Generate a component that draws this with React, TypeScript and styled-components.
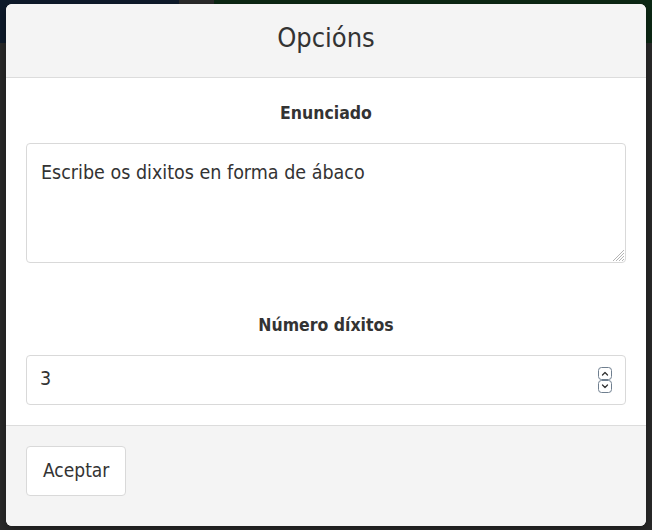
import React from 'react';
import styled, { createGlobalStyle } from 'styled-components';

const FONT = `"DejaVu Sans Condensed", "Liberation Sans Narrow", "Noto Sans", sans-serif`;

const Global = createGlobalStyle`
  html, body {
    margin: 0;
    padding: 0;
  }
  body {
    background: #2a2a2a;
    font-family: ${FONT};
    color: #333;
  }
  * { box-sizing: border-box; }
`;

const Page = styled.div`
  position: relative;
  width: 652px;
  height: 530px;
  background: #2a2a2a;
  overflow: hidden;
`;

const TopBar = styled.div`
  display: flex;
  height: 43px;
`;

const BarSegment = styled.div<{ $width?: number; $color: string }>`
  background: ${(p) => p.$color};
  ${(p) => (p.$width ? `width: ${p.$width}px;` : 'flex: 1;')}
`;

const Modal = styled.div`
  position: absolute;
  left: 6px;
  top: 4px;
  width: 640px;
  height: 522px;
  display: flex;
  flex-direction: column;
  background: #fff;
  border-radius: 6px;
  overflow: hidden;
  box-shadow: 0 3px 12px rgba(0, 0, 0, 0.4);
`;

const Header = styled.div`
  height: 74px;
  display: flex;
  align-items: center;
  justify-content: center;
  background: #f4f4f4;
  border-bottom: 1px solid #dcdcdc;
`;

const Title = styled.h2`
  margin: 0;
  font-size: 27px;
  font-weight: 400;
  line-height: 1;
  color: #333;
  padding-bottom: 6px;
`;

const Body = styled.div`
  display: flex;
  flex-direction: column;
  padding: 20px 20px 20px;
  background: #fff;
`;

const FieldLabel = styled.label<{ $spaced?: boolean }>`
  display: block;
  height: 30px;
  line-height: 30px;
  margin: ${(p) => (p.$spaced ? '47px' : '0')} 0 15px;
  text-align: center;
  font-size: 17.5px;
  font-weight: 700;
  color: #333;
`;

const AreaWrap = styled.div`
  position: relative;
  height: 120px;
`;

const TextArea = styled.textarea`
  display: block;
  width: 100%;
  height: 100%;
  margin: 0;
  padding: 14px 14px;
  border: 1px solid #d9d9d9;
  border-radius: 4px;
  resize: none;
  font-family: inherit;
  font-size: 19.5px;
  line-height: 30px;
  color: #333;
  outline: none;
`;

const ResizeGrip = styled.svg`
  position: absolute;
  right: 1px;
  bottom: 1px;
  width: 14px;
  height: 14px;
  pointer-events: none;
`;

const InputWrap = styled.div`
  position: relative;
  height: 50px;
`;

const NumberInput = styled.input`
  display: block;
  width: 100%;
  height: 100%;
  margin: 0;
  padding: 0 40px 3px 13px;
  border: 1px solid #d9d9d9;
  border-radius: 4px;
  font-family: inherit;
  font-size: 19.5px;
  color: #333;
  outline: none;
  background: #fff;
`;

const Spinner = styled.svg`
  position: absolute;
  right: 14px;
  top: 12px;
  width: 14px;
  height: 26px;
  pointer-events: none;
`;

const Footer = styled.div`
  flex: 1;
  display: flex;
  align-items: flex-start;
  padding: 20px;
  background: #f4f4f4;
  border-top: 1px solid #dcdcdc;
`;

const Button = styled.button`
  height: 50px;
  padding: 0 16px 3px;
  background: #fff;
  border: 1px solid #d9d9d9;
  border-radius: 4px;
  font-family: inherit;
  font-size: 19px;
  color: #333;
  cursor: pointer;
`;

export default function App() {
  return (
    <>
      <Global />
      <Page>
        <TopBar>
          <BarSegment $width={179} $color="#0e1b2c" />
          <BarSegment $width={35} $color="#2c2c2c" />
          <BarSegment $color="#0c2915" />
        </TopBar>
        <Modal>
          <Header>
            <Title>Opcións</Title>
          </Header>
          <Body>
            <FieldLabel htmlFor="enunciado">Enunciado</FieldLabel>
            <AreaWrap>
              <TextArea id="enunciado" defaultValue="Escribe os dixitos en forma de ábaco" />
              <ResizeGrip viewBox="0 0 14 14">
                <g stroke="#b5b5b5" strokeWidth="1">
                  <line x1="13" y1="2" x2="2" y2="13" />
                  <line x1="13" y1="5" x2="5" y2="13" />
                  <line x1="13" y1="8" x2="8" y2="13" />
                  <line x1="13" y1="11" x2="11" y2="13" />
                </g>
              </ResizeGrip>
            </AreaWrap>
            <FieldLabel htmlFor="digitos" $spaced>
              Número díxitos
            </FieldLabel>
            <InputWrap>
              <NumberInput id="digitos" type="text" defaultValue="3" />
              <Spinner viewBox="0 0 14 26">
                <g fill="none" stroke="#6f7f8f" strokeWidth="1">
                  <rect x="0.5" y="0.5" width="13" height="12" rx="3" />
                  <rect x="0.5" y="13.5" width="13" height="12" rx="3" />
                </g>
                <g fill="none" stroke="#333" strokeWidth="1.3" strokeLinecap="round" strokeLinejoin="round">
                  <polyline points="4.5,8 7,5.5 9.5,8" />
                  <polyline points="4.5,18 7,20.5 9.5,18" />
                </g>
              </Spinner>
            </InputWrap>
          </Body>
          <Footer>
            <Button type="button">Aceptar</Button>
          </Footer>
        </Modal>
      </Page>
    </>
  );
}
